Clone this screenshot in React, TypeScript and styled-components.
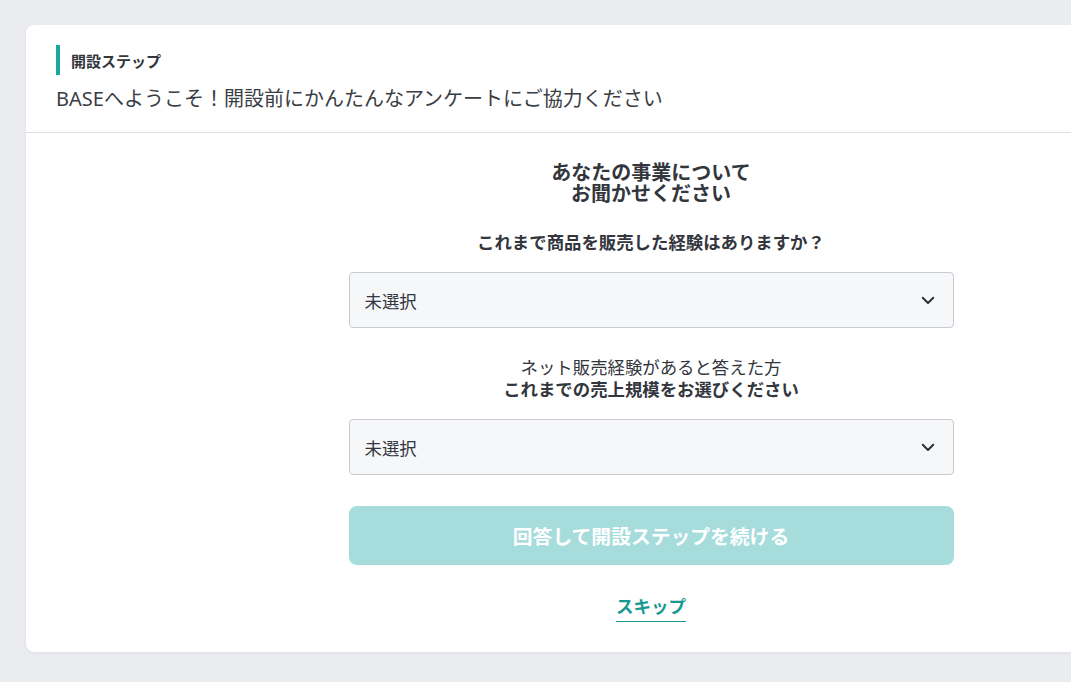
import styled, { createGlobalStyle } from "styled-components";

const GlobalStyle = createGlobalStyle`
  html, body {
    margin: 0;
    padding: 0;
    background: #ebecf0;
    overflow: hidden;
  }
  body {
    font-family: "Noto Sans", "Noto Sans CJK JP", sans-serif;
    color: #33363d;
  }
`;

const Page = styled.div`
  padding: 25px 0 28px 26px;
  width: 1300px;
`;

const Card = styled.section`
  width: 1250px;
  background: #fff;
  border-radius: 8px;
  box-shadow: 0 1px 3px rgba(0, 0, 0, 0.06);
`;

const Header = styled.header`
  padding: 20px 30px 0;
  height: 108px;
  box-sizing: border-box;
  border-bottom: 1px solid #dcdee2;
`;

const StepTitle = styled.h2`
  margin: 0;
  height: 30px;
  display: flex;
  align-items: center;
  border-left: 4px solid #1aa8a0;
  padding-left: 11px;
  font-size: 15px;
  font-weight: 700;
  color: #33363d;
`;

const Lead = styled.p`
  margin: 10px 0 0;
  font-size: 20px;
  line-height: 28px;
  color: #3a3d44;
`;

const Body = styled.div`
  width: 605px;
  margin: 0 auto;
  padding: 29px 0 30px;
  display: flex;
  flex-direction: column;
  align-items: stretch;
  text-align: center;
`;

const Heading = styled.h1`
  margin: 0;
  font-size: 20px;
  line-height: 21px;
  font-weight: 700;
  color: #33363d;
`;

const Question = styled.p<{ $top: number }>`
  margin: ${(p) => p.$top}px 0 0;
  font-size: 17.4px;
  line-height: 22px;
  font-weight: 400;
  color: #33363d;

  strong {
    font-weight: 700;
  }
`;

const SelectBox = styled.div`
  margin-top: 19px;
  height: 56px;
  box-sizing: border-box;
  border: 1px solid #c7cbd1;
  border-radius: 4px;
  background: #f6f7f9;
  display: flex;
  align-items: center;
  justify-content: space-between;
  padding: 0 16px 0 15px;
  font-size: 17.4px;
  color: #33363d;
`;

const Chevron = () => (
  <svg width="18" height="18" viewBox="0 0 24 24" fill="none">
    <path
      d="M5 9l7 7 7-7"
      stroke="#2b2e34"
      strokeWidth="2.6"
      strokeLinecap="round"
      strokeLinejoin="round"
    />
  </svg>
);

const SubmitButton = styled.button`
  margin-top: 31px;
  height: 59px;
  border: 0;
  border-radius: 8px;
  background: #a7dcdc;
  color: #fff;
  font-family: inherit;
  font-size: 19.8px;
  font-weight: 700;
  cursor: not-allowed;
`;

const SkipLink = styled.a`
  align-self: center;
  margin-top: 29px;
  font-size: 17.5px;
  line-height: 24px;
  font-weight: 700;
  color: #18998f;
  text-decoration: none;
  border-bottom: 1px solid #18998f;
  padding-bottom: 3px;
  cursor: pointer;
`;

function Select() {
  return (
    <SelectBox>
      <span>未選択</span>
      <Chevron />
    </SelectBox>
  );
}

export default function App() {
  return (
    <>
      <GlobalStyle />
      <Page>
        <Card>
          <Header>
            <StepTitle>開設ステップ</StepTitle>
            <Lead>BASEへようこそ！開設前にかんたんなアンケートにご協力ください</Lead>
          </Header>
          <Body>
            <Heading>
              あなたの事業について
              <br />
              お聞かせください
            </Heading>
            <Question $top={27}>
              <strong>これまで商品を販売した経験はありますか？</strong>
            </Question>
            <Select />
            <Question $top={28}>
              ネット販売経験があると答えた方
              <br />
              <strong>これまでの売上規模をお選びください</strong>
            </Question>
            <Select />
            <SubmitButton disabled>回答して開設ステップを続ける</SubmitButton>
            <SkipLink>スキップ</SkipLink>
          </Body>
        </Card>
      </Page>
    </>
  );
}
